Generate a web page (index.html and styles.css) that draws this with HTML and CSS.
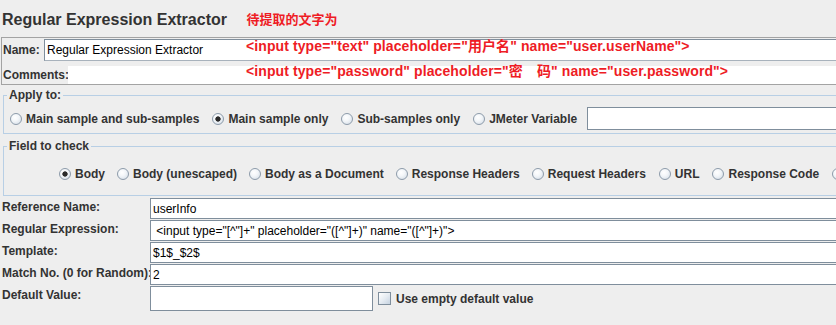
FILE: index.html
```html
<!DOCTYPE html>
<html lang="en">
<head>
    <meta charset="UTF-8">
    <meta name="viewport" content="width=device-width, initial-scale=1.0">
    <title>Regular Expression Extractor</title>
    <link rel="stylesheet" href="styles.css">
</head>
<body>
    <h1 class="title">Regular Expression Extractor <span class="note">待提取的文字为</span></h1>

    <div class="name-box">
        <div class="name-row">
            <label class="lbl name-lbl">Name:</label>
            <input class="field name-field" type="text" value="Regular Expression Extractor">
        </div>
        <div class="name-row">
            <label class="lbl comments-lbl">Comments:</label>
            <div class="comments-field"></div>
        </div>
        <!-- annotations pasted over the screenshot -->
        <p class="mark mark-name">&lt;input type="text" placeholder="用户名" name="user.userName"&gt;</p>
        <p class="mark mark-pass">&lt;input type="password" placeholder="密　码" name="user.password"&gt;</p>
    </div>

    <fieldset class="group apply">
        <legend>Apply to:</legend>
        <div class="options apply-options">
            <label class="opt"><input type="radio" name="scope"> Main sample and sub-samples</label>
            <label class="opt"><input type="radio" name="scope" checked> Main sample only</label>
            <label class="opt"><input type="radio" name="scope"> Sub-samples only</label>
            <label class="opt"><input type="radio" name="scope"> JMeter Variable</label>
            <input class="field var-field" type="text">
        </div>
    </fieldset>

    <fieldset class="group check">
        <legend>Field to check</legend>
        <div class="options check-options">
            <label class="opt"><input type="radio" name="field" checked> Body</label>
            <label class="opt"><input type="radio" name="field"> Body (unescaped)</label>
            <label class="opt"><input type="radio" name="field"> Body as a Document</label>
            <label class="opt"><input type="radio" name="field"> Response Headers</label>
            <label class="opt"><input type="radio" name="field"> Request Headers</label>
            <label class="opt"><input type="radio" name="field"> URL</label>
            <label class="opt"><input type="radio" name="field"> Response Code</label>
            <label class="opt"><input type="radio" name="field"> Response Message</label>
        </div>
    </fieldset>

    <div class="form">
        <label class="lbl">Reference Name:</label>
        <input class="field" type="text" value="userInfo">

        <label class="lbl">Regular Expression:</label>
        <input class="field" type="text" value=" <input type=&quot;[^&quot;]+&quot; placeholder=&quot;([^&quot;]+)&quot; name=&quot;([^&quot;]+)&quot;>">

        <label class="lbl">Template:</label>
        <input class="field" type="text" value="$1$_$2$">

        <label class="lbl">Match No. (0 for Random):</label>
        <input class="field" type="text" value="2">

        <label class="lbl">Default Value:</label>
        <div class="default-row">
            <input class="field default-field" type="text">
            <label class="opt"><input type="checkbox"> Use empty default value</label>
        </div>
    </div>
</body>
</html>
```

FILE: styles.css
```css
html, body {
    overflow: hidden;
}

body {
    margin: 0;
    width: 1000px;
    height: 325px;
    background: #eeeeee;
    color: #333333;
    font-family: "Liberation Sans", "Noto Sans CJK SC", sans-serif;
    font-size: 12px;
}

.title {
    margin: 0;
    padding: 10px 0 7px 2px;
    height: 20px;
    font-size: 16px;
    line-height: 20px;
    font-weight: bold;
}

.note {
    margin-left: 15px;
    color: #ee1c25;
    font-size: 13px;
    vertical-align: top;
}

.lbl {
    font-weight: bold;
    white-space: nowrap;
}

.field {
    box-sizing: border-box;
    margin: 0;
    padding: 0 3px 0 2px;
    border: 1px solid #7f8e9c;
    background: #ffffff;
    color: #000000;
    font-family: "Liberation Sans", sans-serif;
    font-size: 12px;
    outline: none;
}

/* Name / Comments box */
.name-box {
    position: relative;
    margin-left: 1px;
    padding-top: 1px;
    height: 45px;
    border: 1px solid #a3a3a3;
}

.name-row {
    display: flex;
    align-items: center;
}

.name-row + .name-row {
    margin-top: 5px;
}

.name-lbl {
    width: 41px;
    padding-left: 1px;
}

.comments-lbl {
    width: 65px;
    padding-left: 1px;
}

.name-field {
    flex: 1;
    height: 22px;
    border-right: none;
    border-bottom-color: #a8b2bc;
}

.comments-field {
    flex: 1;
    height: 18px;
    background: #ffffff;
}

.mark {
    position: absolute;
    left: 244px;
    margin: 0;
    color: #ee1c25;
    font-size: 14px;
    font-weight: bold;
    line-height: 16px;
    letter-spacing: 0.1px;
    white-space: nowrap;
}

.mark-name {
    top: 0;
}

.mark-pass {
    top: 25px;
}

/* titled groups */
.group {
    box-sizing: border-box;
    min-width: 0;
    width: 1000px;
    margin: 3px 0 0 3px;
    padding: 5px 0 3px 3px;
    border: 1px solid #b8cfe5;
}

.group legend {
    padding: 0 2px;
    font-weight: bold;
    line-height: 14px;
}

.check {
    margin-top: 5px;
    padding: 13px 0 13px 3px;
}

.options {
    display: flex;
    align-items: center;
    padding-left: 3px;
    white-space: nowrap;
}

.apply-options .opt {
    margin-right: 13px;
}

.check-options {
    height: 16px;
    padding-left: 52px;
}

.opt {
    display: flex;
    align-items: center;
    margin-right: 12px;
    font-weight: bold;
    line-height: 16px;
}

.check-options .opt:nth-child(n+5) {
    margin-right: 13px;
}

.opt input[type="radio"] {
    appearance: none;
    box-sizing: border-box;
    width: 12px;
    height: 12px;
    margin: 0 4px 0 0;
    border: 1px solid #8d9baa;
    border-radius: 50%;
    background: radial-gradient(circle at 40% 35%, #ffffff 0, #f3f6f9 40%, #cfd9e4 100%);
}

.opt input[type="radio"]:checked {
    background: radial-gradient(circle, #2a2a2a 0, #2a2a2a 2.3px, transparent 3px),
                radial-gradient(circle at 40% 35%, #ffffff 0, #f3f6f9 40%, #cfd9e4 100%);
}

.opt input[type="checkbox"] {
    appearance: none;
    box-sizing: border-box;
    width: 13px;
    height: 13px;
    margin: 0 5px 0 0;
    border: 1px solid #7f8e9c;
    background: linear-gradient(135deg, #ffffff 0, #e6ecf2 50%, #c6d3e1 100%);
}

.var-field {
    flex: 1;
    height: 23px;
    margin-left: -3px;
}

/* extractor settings */
.form {
    display: grid;
    grid-template-columns: 148px 1fr;
    grid-auto-rows: 21px;
    row-gap: 1px;
    margin-top: 2px;
    padding-left: 2px;
}

.form .lbl {
    line-height: 18px;
}

.form > .field {
    height: 21px;
}

.default-row {
    display: flex;
    align-items: center;
    height: 25px;
}

.default-field {
    width: 223px;
    height: 25px;
    margin-right: 5px;
}
```
